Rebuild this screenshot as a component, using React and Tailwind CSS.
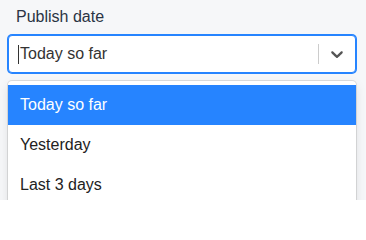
export default function App() {
  const options = ["Today so far", "Yesterday", "Last 3 days"];
  return (
    <div
      className="w-[366px] h-[200px] overflow-hidden bg-[#f6f7f9] pl-2 pr-[10px] pt-[5px]"
      style={{ fontFamily: '"Liberation Sans", Arial, sans-serif' }}
    >
      <div className="pl-2 text-[16px] leading-6 text-[#2a3444] mb-1.5">Publish date</div>
      <div className="flex items-center h-[38px] bg-white rounded-[4px] border border-[#2684ff] shadow-[0_0_0_1px_#2684ff]">
        <div className="flex-1 flex items-center pl-[9px] text-[16px] text-[#333]">
          <span className="inline-block w-px h-[19px] bg-[#333] mr-px"></span>
          <span>Today so far</span>
        </div>
        <span className="w-px h-5 bg-[#ccc]"></span>
        <div className="p-2 text-[#555]">
          <svg width="20" height="20" viewBox="0 0 20 20" fill="currentColor">
            <path d="M4.516 7.548c0.436-0.446 1.043-0.481 1.576 0l3.908 3.747 3.908-3.747c0.533-0.481 1.141-0.446 1.574 0 0.436 0.445 0.408 1.197 0 1.615-0.406 0.418-4.695 4.502-4.695 4.502-0.217 0.223-0.502 0.335-0.787 0.335s-0.57-0.112-0.789-0.335c0 0-4.287-4.084-4.695-4.502s-0.436-1.17 0-1.615z" />
          </svg>
        </div>
      </div>
      <div className="mt-2 bg-white rounded-[4px] shadow-[0_0_0_1px_rgba(0,0,0,0.1),0_4px_11px_rgba(0,0,0,0.1)] py-1">
        {options.map((o, i) => (
          <div
            key={o}
            className={
              i === 0
                ? "px-3 py-2 text-[16px] leading-6 bg-[#2684ff] text-white"
                : "px-3 py-2 text-[16px] leading-6 text-[#222]"
            }
          >
            {o}
          </div>
        ))}
      </div>
    </div>
  );
}
